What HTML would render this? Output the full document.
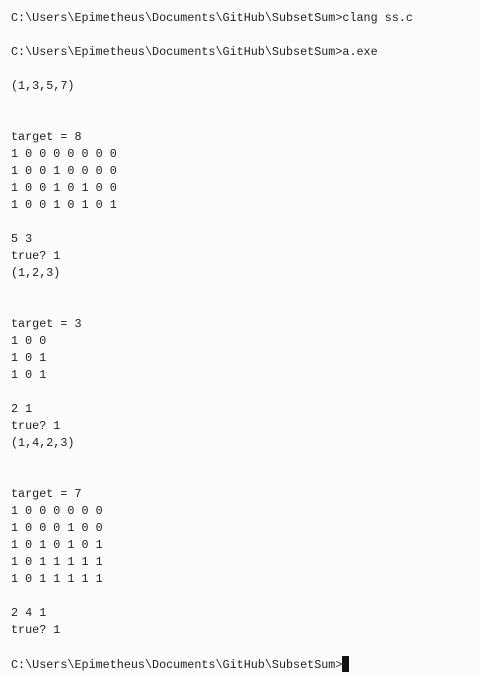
<!DOCTYPE html>
<html><head><style>
html,body{margin:0;padding:0;background:#fcfcfc;}
body{width:480px;height:676px;overflow:hidden;}
pre{margin:0;position:absolute;left:11px;top:10px;font-family:"Liberation Mono",monospace;font-size:11.75px;line-height:17px;color:#222;}
.c{display:inline-block;width:7px;height:16px;background:#111;vertical-align:-4px;}
</style></head><body><pre>C:\Users\Epimetheus\Documents\GitHub\SubsetSum>clang ss.c

C:\Users\Epimetheus\Documents\GitHub\SubsetSum>a.exe

(1,3,5,7)


target = 8
1 0 0 0 0 0 0 0
1 0 0 1 0 0 0 0
1 0 0 1 0 1 0 0
1 0 0 1 0 1 0 1

5 3
true? 1
(1,2,3)


target = 3
1 0 0
1 0 1
1 0 1

2 1
true? 1
(1,4,2,3)


target = 7
1 0 0 0 0 0 0
1 0 0 0 1 0 0
1 0 1 0 1 0 1
1 0 1 1 1 1 1
1 0 1 1 1 1 1

2 4 1
true? 1

C:\Users\Epimetheus\Documents\GitHub\SubsetSum><span class="c"></span></pre></body></html>
